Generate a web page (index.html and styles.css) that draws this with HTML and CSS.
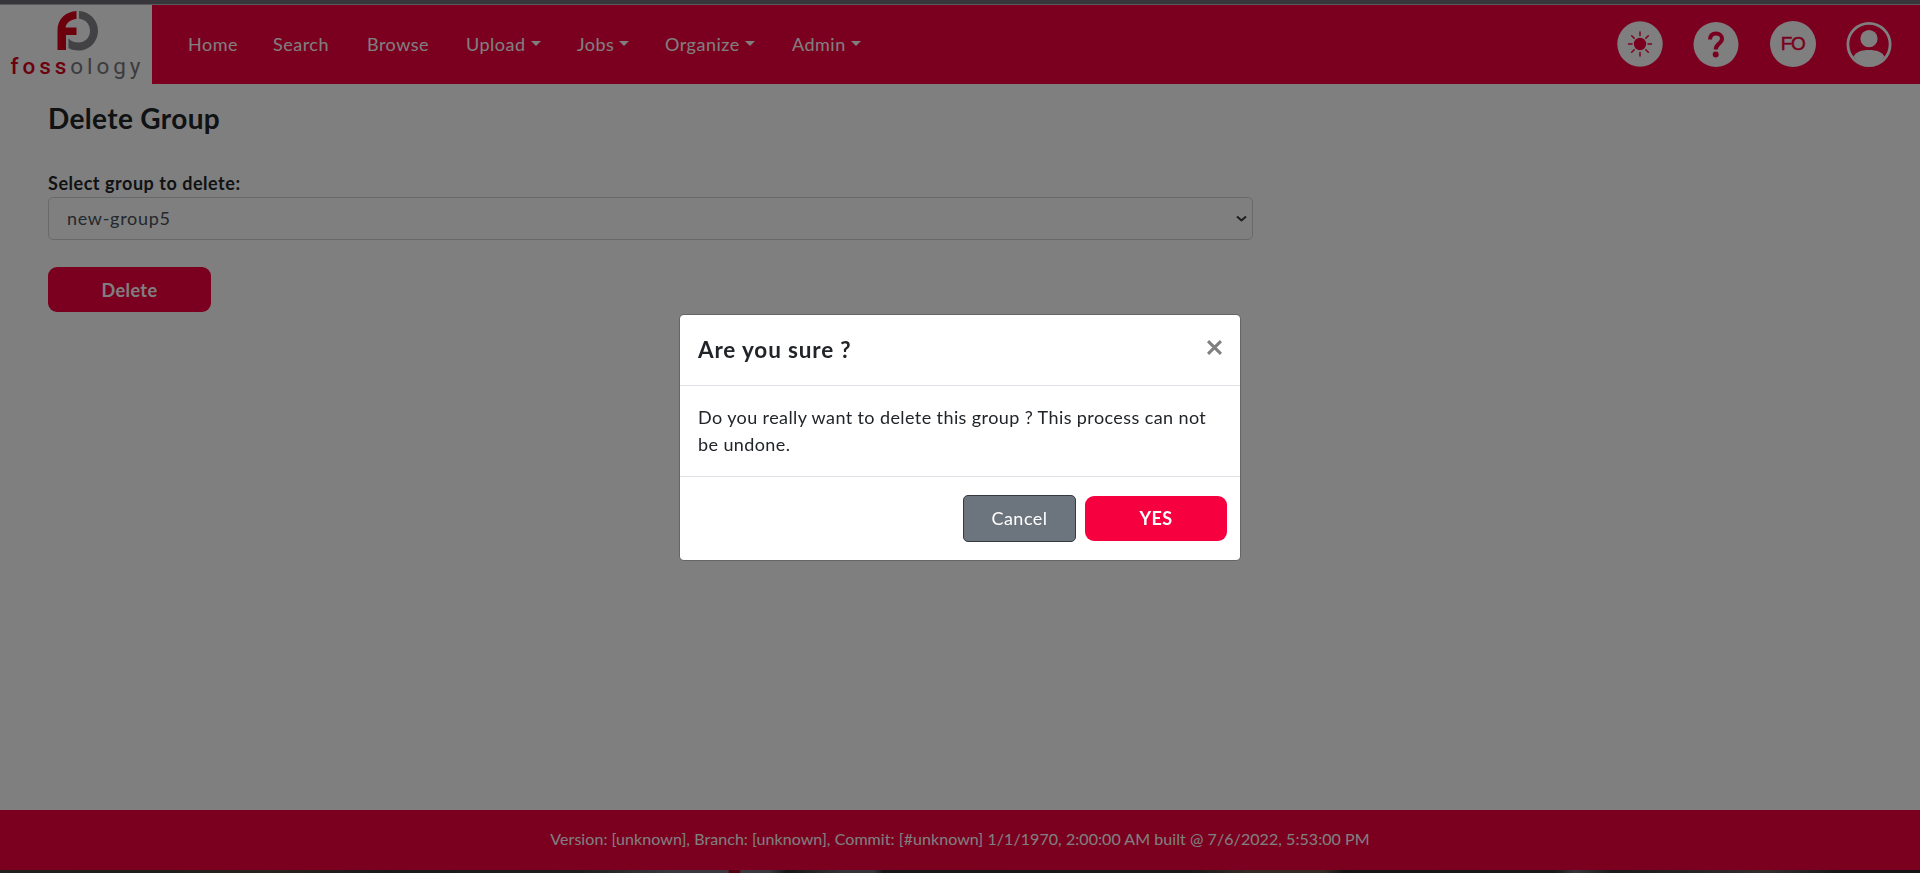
FILE: index.html
```html
<!DOCTYPE html>
<html lang="en">
<head>
<meta charset="utf-8">
<title>Delete Group</title>
<link rel="stylesheet" href="styles.css">
</head>
<body>
<div class="page">
  <div class="top-edge"></div>
  <header class="header">
    <a class="logo">
      <svg class="logo-mark" width="44" height="42" viewBox="0 0 44 42">
        <path fill="#d9001b" d="M20.5 1v8C14 9.600 10.500 13 9.500 17.500h11V25H10v15H1.500V20C1.500 9 10 1.500 20.500 1z"/>
        <path fill="#858489" d="M23 1c10.500.5 19 9 19 19.700C42 32 33 40.500 22.500 40.500c-3.500 0-7-.7-10-2.500V28.500c3 3 6.500 4 10 4 6.500 0 11.500-5 11.500-11.800C34 14 29.500 9.300 23 8.700z"/>
      </svg>
      <span class="logo-text"><b>foss</b>ology</span>
    </a>
    <nav class="nav">
      <a class="home"><span>Home</span></a>
      <a class="search"><span>Search</span></a>
      <a class="browse"><span>Browse</span></a>
      <a class="upload"><span>Upload</span><i class="caret"></i></a>
      <a class="jobs"><span>Jobs</span><i class="caret"></i></a>
      <a class="organize"><span>Organize</span><i class="caret"></i></a>
      <a class="admin"><span>Admin</span><i class="caret"></i></a>
    </nav>
    <div class="tools">
      <svg width="46" height="46" viewBox="0 0 46 46">
        <circle cx="23" cy="23" r="22.700" fill="#fff"/>
        <circle cx="23" cy="23" r="6.200" fill="#f7003f"/>
        <path stroke="#f7003f" stroke-width="1.500" stroke-linecap="round" d="M23 11v3.500M23 31.500V35M11.500 23H15M31 23h3.500M14.700 14.700l2.500 2.500M28.800 28.800l2.500 2.500M31.300 14.700l-2.500 2.500M17.200 28.800l-2.500 2.500"/>
      </svg>
      <svg width="46" height="46" viewBox="0 0 46 46">
        <circle cx="23" cy="23.500" r="22.500" fill="#fff"/>
        <path fill="none" stroke="#f7003f" stroke-width="4" d="M17 18.500c.2-4 2.600-5.900 6-5.900 3.500 0 6 1.900 6 5.200 0 5-6.300 4.800-6.300 10.700"/>
        <circle cx="22.700" cy="33.500" r="3" fill="#f7003f"/>
      </svg>
      <span class="initials">FO</span>
      <svg width="46" height="46" viewBox="0 0 46 46">
        <circle cx="23" cy="23.500" r="21.100" fill="none" stroke="#fff" stroke-width="2.800"/>
        <circle cx="23" cy="17.700" r="8.600" fill="#fff"/>
        <path fill="#fff" d="M7.500 35.500C10 31 15.500 29 23 29s13 2 15.500 6.500C34.500 41.500 29.500 44.500 23 44.500S11.500 41.500 7.500 35.500z"/>
      </svg>
    </div>
  </header>
  <main class="content">
    <h1 class="title"><span>Delete Group</span></h1>
    <label class="label" for="group"><span>Select group to delete:</span></label>
    <div class="select" id="group">
      <span>new-group5</span>
      <svg width="11" height="8" viewBox="0 0 11 8"><path fill="none" stroke="#343a40" stroke-width="2" d="M1 1.500l4.500 4L10 1.500"/></svg>
    </div>
    <button class="btn btn-delete"><span>Delete</span></button>
  </main>
  <footer class="footer"><span>Version: [unknown], Branch: [unknown], Commit: [#unknown] 1/1/1970, 2:00:00 AM built @ 7/6/2022, 5:53:00 PM</span></footer>
  <div class="bottom-edge"></div>
</div>
<div class="overlay">
  <section class="modal">
    <div class="modal-header">
      <h2 class="modal-title"><span>Are you sure ?</span></h2>
      <svg class="close" width="15" height="15" viewBox="0 0 14 14"><path stroke="#7f7f7f" stroke-width="2.800" d="M1 1l12 12M13 1L1 13"/></svg>
    </div>
    <p class="modal-body"><span>Do you really want to delete this group ? This process can not</span><br><span class="second">be undone.</span></p>
    <div class="modal-footer">
      <button class="btn-cancel"><span>Cancel</span></button>
      <button class="btn btn-yes"><span>YES</span></button>
    </div>
  </section>
</div>
</body>
</html>
```
FILE: styles.css
```css
* { box-sizing: border-box; }
body {
  margin: 0;
  font-family: Lato, "Open Sans", sans-serif;
  font-size: 18px;
  color: #212529;
  overflow: hidden;
}
button { font-family: inherit; }
.page { height: 873px; display: flex; flex-direction: column; background: #fff; }
.top-edge { height: 5px; background: #6e6d74; border-bottom: 1px solid #b2b2b8; }
.header { height: 79px; display: flex; background: #f7003f; }
.logo { width: 152px; background: #fff; display: flex; flex-direction: column; align-items: center; padding: 5px 0 0 3px; }
.logo-mark { display: block; }
.logo-text { font: 22.500px/26px "Roboto", sans-serif; letter-spacing: 3.950px; color: #77787c; margin-top: 1px; white-space: nowrap; }
.logo-text b { color: #d9001b; font-weight: 500; }
.nav { display: flex; padding-left: 36px; color: #fff; line-height: 76px; height: 77px; letter-spacing: .5px; white-space: nowrap; }
.nav a { display: flex; align-items: center; justify-content: flex-start; gap: 5px; }
.home { width: 85px; }
.search { width: 94px; }
.browse { width: 99px; }
.upload { width: 111px; }
.jobs { width: 88px; }
.organize { width: 127px; }
.caret { border: 5.500px solid transparent; border-top-color: #fff; border-bottom: 0; margin-top: -1px; }
.tools { margin-left: auto; margin-right: 28px; display: flex; gap: 30.500px; padding-top: 16px; }
.initials { width: 46px; height: 46px; border-radius: 50%; background: #fff; color: #f7003f; font: 500 19px/45px "Liberation Sans", sans-serif; -webkit-text-stroke: .5px #f7003f; text-align: center; letter-spacing: -1.500px; }
.content { flex: 1; padding: 14px 48px 0; }
.title { margin: 0; font-size: 28px; line-height: 40px; font-weight: 700; letter-spacing: .35px; }
.label { display: block; margin-top: 33px; height: 26px; line-height: 24px; font-weight: 700; letter-spacing: .53px; white-space: nowrap; }
.select { width: 1205px; height: 43px; border: 1px solid #ced4da; border-radius: 5px; display: flex; align-items: center; justify-content: space-between; padding: 0 5px 0 18px; color: #495057; letter-spacing: .7px; }
.select span { padding-bottom: 2px; }
.btn { border: 0; border-radius: 9px; height: 45px; background: #f7003f; color: #fff; font-size: 18px; font-weight: 700; letter-spacing: .4px; }
.btn-delete { display: block; width: 163px; margin-top: 27px; }
.footer { height: 60px; background: #f7003f; color: #fff; font-size: 16px; line-height: 58px; letter-spacing: .06px; text-align: center; white-space: nowrap; }
.bottom-edge { height: 3px; background: linear-gradient(90deg, #44403a 0, #3d3b34 8%, #52423a 14%, #333 20%, #3a3a38 30%, #74717d 35%, #74717d 37.900%, #a00020 38%, #a00020 38.500%, #74717d 38.600%, #74717d 40%, #2c2c2c 41%, #6b6870 44%, #6b6870 45.500%, #2e2b30 46%, #333 62%, #6b5549 65%, #6b5549 69%, #29292c 70%, #333 81%, #6c6870 82%, #353337 84%, #665a57 92%, #29292c 96%); }
.overlay { position: fixed; inset: 0; background: rgba(0, 0, 0, .5); display: flex; align-items: flex-start; justify-content: center; padding-top: 314px; }
.modal { width: 562px; height: 247px; background: #fff; background-clip: padding-box; border: 1px solid rgba(0, 0, 0, .2); border-radius: 5px; }
.modal-header { height: 71px; border-bottom: 1px solid #dee2e6; display: flex; justify-content: space-between; padding: 0 18px 0 18px; }
.modal-title { margin: 0; font-size: 22.500px; line-height: 70px; font-weight: 700; letter-spacing: .85px; }
.close { margin-top: 25px; }
.modal-body { height: 91px; margin: 0; padding: 18px 0 0 18px; line-height: 27px; letter-spacing: .4px; border-bottom: 1px solid #dee2e6; white-space: nowrap; }
.modal-footer { display: flex; justify-content: flex-end; align-items: center; gap: 9px; height: 83px; padding-right: 13px; }
.btn-cancel { width: 113px; height: 47px; border: 1px solid #343a40; border-radius: 5px; background: #6c757d; color: #fff; font-size: 18px; letter-spacing: .5px; padding-bottom: 3px; }
.btn-yes { width: 142px; padding-bottom: 2px; }
```
